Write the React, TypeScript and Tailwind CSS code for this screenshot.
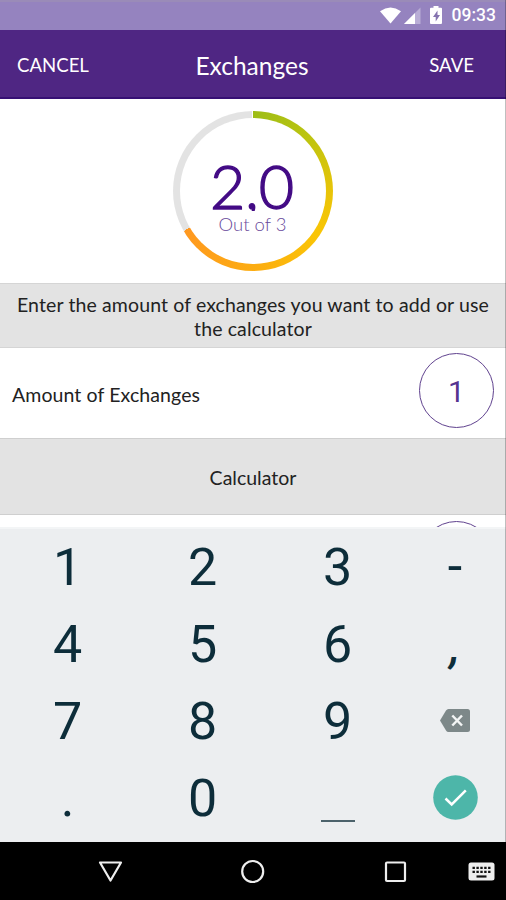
import React from "react";

const keys = ["1", "2", "3", "4", "5", "6", "7", "8", "9", ".", "0"];

const StatusBar: React.FC = () => (
  <div className="flex h-[30px] items-center justify-end border-t-2 border-[#9a8bb8] bg-[#9583bf] pr-[10px]">
    <svg width="62" height="20" viewBox="0 0 62 20" className="mr-[10px]">
      {/* Wifi */}
      <path d="M0 5.2Q10.5 -2.2 21 5.2L10.5 17.5Z" fill="#fff" />
      {/* Signal */}
      <path d="M24 18L40.500 1.500V18Z" fill="#b9add6" />
      <path d="M24 18L35 7V18Z" fill="#fff" />
      {/* Battery */}
      <path
        d="M53.500 0h5v1.800h2.500a1 1 0 0 1 1 1V17a1 1 0 0 1-1 1H51a1 1 0 0 1-1-1V2.800a1 1 0 0 1 1-1h2.500Z"
        fill="#fff"
      />
      <path d="M57.500 4.500L53 11h2.700v4.500L60 9h-2.500Z" fill="#8573af" />
    </svg>
    <span className="font-['Roboto'] text-[17.5px] leading-none font-medium text-white">
      09:33
    </span>
  </div>
);

const Header: React.FC = () => (
  <header className="flex h-[69px] items-center border-b-2 border-[#371074] bg-[#4f2683] pt-[5px] pr-[32px] pl-[17px] text-white">
    <span className="w-[119px] text-[18.6px]">CANCEL</span>
    <span className="flex-1 text-center text-[24.5px]">Exchanges</span>
    <span className="w-[106px] text-right text-[18.6px]">SAVE</span>
  </header>
);

const Gauge: React.FC = () => (
  <section className="flex h-[184px] justify-center pt-3">
    <div className="flex size-40 items-center justify-center rounded-full bg-[conic-gradient(#9dbd16_0deg,#bcc410_45deg,#e8c408_90deg,#fac505_125deg,#fcae10_175deg,#ff9820_240deg,#e3e3e3_240deg,#e3e3e3_359deg,#fff_359deg)]">
      <div className="flex size-[146px] flex-col items-center rounded-full bg-white pt-[43px]">
        {/* The comma's tail is cut by the label's box */}
        <span className="mr-[2px] h-[50px] overflow-hidden text-[61px] leading-[50px] font-light text-[#430b85] [-webkit-text-stroke:1.4px_#430b85]">
          2,0
        </span>
        <span className="mt-[2px] mr-[1px] text-[18.5px] leading-[22px] font-light text-[#694a9b]">
          Out of 3
        </span>
      </div>
    </div>
  </section>
);

const Keyboard: React.FC = () => (
  <section className="flex h-[315px] border-t-2 border-[#f3f5f6] bg-[#eceef0] font-['Roboto'] text-[#0d2d3a]">
    <div className="grid w-[405px] grid-cols-3 grid-rows-[77px_77px_77px_77px] text-center text-[52px] leading-[77px]">
      {keys.map((key) => (
        <span key={key}>{key}</span>
      ))}
      {/* Space key */}
      <span className="mx-auto mt-[60px] h-[1.500px] w-[34px] bg-[#4c626b]" />
    </div>

    <div className="grid w-[100px] grid-rows-[77px_77px_77px_77px] text-center text-[52px] leading-[76px]">
      <span>-</span>
      <span className="pt-[2px] text-[46px] font-medium italic">,</span>

      <span className="flex items-center justify-center pb-[2px]">
        <svg width="30" height="23" viewBox="0 0 30 23">
          <path
            d="M8.500 0H27.500Q30 0 30 2.500V20.500Q30 23 27.500 23H8.500Q7 23 6 21.500L0 11.500L6 1.500Q7 0 8.500 0Z"
            fill="#7d8889"
          />
          <path
            d="M12.300 6.500L22 16.500M22 6.500L12.300 16.500"
            stroke="#f3f5f5"
            strokeWidth="2.500"
          />
        </svg>
      </span>

      <span className="flex items-center justify-center pb-[2px]">
        <svg width="45" height="45" viewBox="0 0 45 45">
          <circle cx="22.500" cy="22.500" r="22.300" fill="#4db6a9" />
          <path
            d="M12.500 23.500L18.700 29.500L32.800 15.300"
            fill="none"
            stroke="#fff"
            strokeWidth="2.500"
          />
        </svg>
      </span>
    </div>
  </section>
);

const NavBar: React.FC = () => (
  <nav className="h-[58px] bg-black">
    <svg width="506" height="58" fill="none" stroke="#eee" strokeWidth="2.200">
      <path d="M100 20.500H121L110.500 38.500Z" strokeLinejoin="round" />
      <circle cx="252.700" cy="29.500" r="10.500" />
      <rect x="386" y="20.500" width="19" height="18.500" rx="1" />
      <rect x="468.500" y="20.500" width="26" height="18" rx="2.500" fill="#eee" stroke="none" />
      <path
        d="M472.500 25.800H490.500M472.500 29.800H490.500"
        stroke="#111"
        strokeDasharray="2.400 1.500"
      />
      <path d="M476.500 34.500H486.500" stroke="#111" />
    </svg>
  </nav>
);

const App: React.FC = () => {
  return (
    <div className="relative h-[900px] w-[506px] overflow-hidden bg-white font-['Lato',sans-serif] text-[#222]">
      <StatusBar />
      <Header />
      <Gauge />

      <p className="h-[65px] border-y border-[#d5d5d5] bg-[#e3e3e3] px-3 pt-[9px] text-center text-[19.5px] leading-[23.5px] tracking-[0.12px]">
        Enter the amount of exchanges you want to add or use the calculator
      </p>

      {/* Amount */}
      <div className="flex h-[90px] items-start justify-between pt-[5px] pr-3 pl-3">
        <span className="pt-[30px] text-[19.5px] leading-6 tracking-[0.1px]">
          Amount of Exchanges
        </span>
        <span className="flex size-[75px] items-center justify-center rounded-full border-[1.5px] border-[#61438f] pt-[2px] font-['Roboto'] text-[30px] text-[#563490]">
          1
        </span>
      </div>

      <div className="flex h-[77px] items-center justify-center border-y border-[#cfcfcf] bg-[#e3e3e3] pt-[2px] text-[19.5px]">
        Calculator
      </div>

      {/* Next row, mostly hidden by the keyboard */}
      <div className="flex h-3 justify-end overflow-hidden pt-[6px] pr-3">
        <span className="size-[75px] shrink-0 rounded-full border-[1.5px] border-[#61438f]" />
      </div>

      <Keyboard />
      <NavBar />

      <div className="absolute top-0 right-0 h-[842px] w-px bg-black/25" />
    </div>
  );
};

export default App;
